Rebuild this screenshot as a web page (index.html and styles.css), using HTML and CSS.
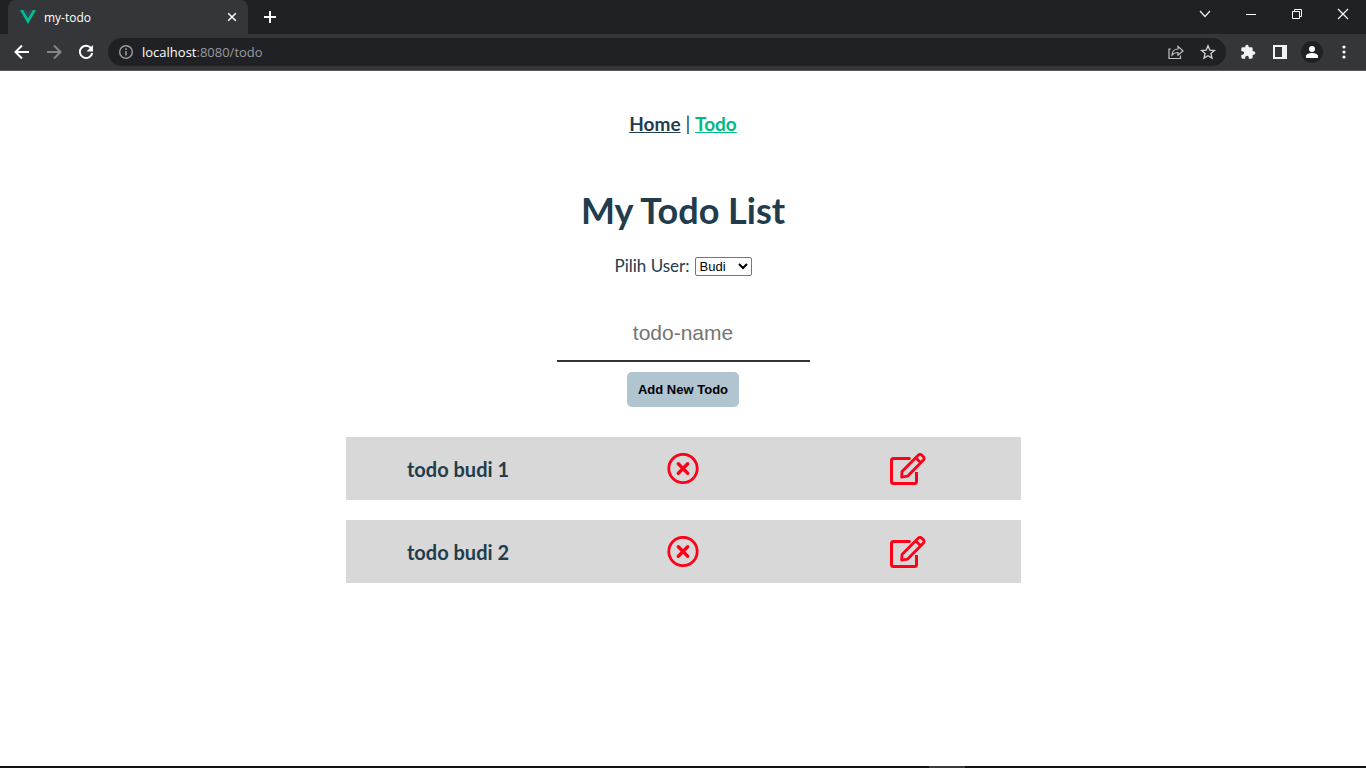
FILE: index.html
```html
<!DOCTYPE html>
<html lang="id">
<head>
<meta charset="utf-8">
<title>my-todo</title>
<link rel="stylesheet" href="styles.css">
</head>
<body>
<header class="browser">
  <div class="tabstrip">
    <div class="tab">
      <svg class="logo" width="16" height="14" viewBox="0 0 16 14"><path fill="#00c08b" d="M0 0h3.200L8 8.300 12.800 0H16L8 14z"/><path fill="#35495e" d="M3.200 0h3L8 3l1.800-3h3L8 8.300z"/></svg>
      <span class="tab-title">my-todo</span>
      <button class="icon tab-close" aria-label="Close tab"><svg width="10" height="10" viewBox="0 0 10 10"><path d="M1.200 1.200l7.600 7.600M8.800 1.200L1.200 8.800" stroke="#fff" stroke-width="1.500"/></svg></button>
    </div>
    <button class="icon new-tab" aria-label="New tab"><svg width="12" height="12" viewBox="0 0 12 12"><path d="M6 0v12M0 6h12" stroke="#fff" stroke-width="2"/></svg></button>
    <div class="window-buttons">
      <button class="icon" aria-label="Search tabs"><svg width="12" height="12" viewBox="0 0 12 12"><path d="M1 3l5 5.500L11 3" fill="none" stroke="#eee" stroke-width="1.200"/></svg></button>
      <button class="icon" aria-label="Minimize"><svg width="12" height="12" viewBox="0 0 12 12"><path d="M1 6.500h10" stroke="#fff"/></svg></button>
      <button class="icon" aria-label="Restore"><svg width="12" height="12" viewBox="0 0 12 12"><path d="M1.500 3.500h7v7h-7zM3.500 3.500v-2h7v7h-2" fill="none" stroke="#fff"/></svg></button>
      <button class="icon" aria-label="Close"><svg width="12" height="12" viewBox="0 0 12 12"><path d="M1 1l10 10M11 1L1 11" stroke="#fff" stroke-width="1.200"/></svg></button>
    </div>
  </div>
  <div class="toolbar">
    <button class="icon" aria-label="Back"><svg width="16" height="16" viewBox="0 0 16 16"><path d="M15 8H2M8 1.500L1.500 8 8 14.500" fill="none" stroke="#fff" stroke-width="2"/></svg></button>
    <button class="icon" aria-label="Forward"><svg width="16" height="16" viewBox="0 0 16 16"><path d="M1 8h13M8 1.500L14.500 8 8 14.500" fill="none" stroke="#85868a" stroke-width="2"/></svg></button>
    <button class="icon" aria-label="Reload"><svg width="16" height="16" viewBox="0 0 16 16"><path d="M13.300 4.500A6.200 6.200 0 1 0 14.200 9" fill="none" stroke="#fff" stroke-width="2"/><path d="M15 1v6.500H8.500z" fill="#fff"/></svg></button>
    <div class="address">
      <svg width="16" height="16" viewBox="0 0 16 16"><circle cx="8" cy="8" r="6.300" fill="none" stroke="#9aa0a6" stroke-width="1.400"/><path d="M8 7v4.500M8 4.300v1.600" stroke="#9aa0a6" stroke-width="1.500"/></svg>
      <span class="url"><span class="host">localhost</span>:8080/todo</span>
      <button class="icon" aria-label="Share"><svg width="16" height="16" viewBox="0 0 16 16"><path d="M3 5H1v9.500h11.500v-3" fill="none" stroke="#c0c2c5" stroke-width="1.200"/><path d="M4 11c.3-4 2.500-6 6-6V2.300L15 7l-5 4.300V8.500C7.300 8.500 5.500 9.200 4 11z" fill="none" stroke="#c0c2c5" stroke-width="1.200"/></svg></button>
      <button class="icon" aria-label="Bookmark"><svg width="16" height="16" viewBox="0 0 16 16"><path d="M8 1.800l1.800 4.300 4.700.4-3.600 3 1.100 4.600L8 11.700l-4 2.400 1.100-4.600-3.600-3 4.700-.4z" fill="none" stroke="#d0d2d5" stroke-width="1.300"/></svg></button>
    </div>
    <button class="icon" aria-label="Extensions"><svg width="16" height="16" viewBox="0 0 24 24"><path fill="#f1f3f4" d="M20.500 11H19V7a2 2 0 0 0-2-2h-4V3.500a2.500 2.500 0 0 0-5 0V5H4a2 2 0 0 0-2 2v3.800h1.500a2.700 2.700 0 0 1 0 5.400H2V20c0 1.100.9 2 2 2h3.800v-1.500a2.700 2.700 0 0 1 5.400 0V22H17a2 2 0 0 0 2-2v-4h1.500a2.500 2.500 0 0 0 0-5z"/></svg></button>
    <button class="icon" aria-label="Side panel"><svg width="16" height="14" viewBox="0 0 16 14"><path d="M2 1h12v12H2z" fill="none" stroke="#f1f3f4" stroke-width="2"/><path d="M10 0h5v14h-5z" fill="#f1f3f4"/></svg></button>
    <button class="icon profile" aria-label="Profile"><svg width="22" height="22" viewBox="0 0 22 22"><circle cx="11" cy="11" r="11" fill="#202124"/><circle cx="11" cy="8" r="3" fill="#fff"/><path d="M5 17v-2c0-2 3.500-3 6-3s6 1 6 3v2z" fill="#fff"/></svg></button>
    <button class="icon menu" aria-label="Menu"><svg width="4" height="14" viewBox="0 0 4 14"><g fill="#fff"><circle cx="2" cy="2" r="1.600"/><circle cx="2" cy="7" r="1.600"/><circle cx="2" cy="12" r="1.600"/></g></svg></button>
  </div>
</header>
<main class="page">
  <nav class="nav"><a href="#home">Home</a> | <a class="active" href="#todo">Todo</a></nav>
  <h1 class="title">My Todo List</h1>
  <div class="user-row">
    <label for="user">Pilih User:</label>
    <select id="user" class="user-select"><option>Budi</option></select>
  </div>
  <form class="add-form">
    <input class="todo-input" type="text" placeholder="todo-name" aria-label="todo-name">
    <button class="add-button" type="button">Add New Todo</button>
  </form>
  <ul class="todos">
    <li class="todo">
      <span>todo budi 1</span>
      <button class="icon" aria-label="Delete todo budi 1"><svg width="32" height="32" viewBox="0 0 32 32"><use href="#remove"/></svg></button>
      <button class="icon" aria-label="Edit todo budi 1"><svg width="36" height="32" viewBox="0 0 36 32"><use href="#edit"/></svg></button>
    </li>
    <li class="todo">
      <span>todo budi 2</span>
      <button class="icon" aria-label="Delete todo budi 2"><svg width="32" height="32" viewBox="0 0 32 32"><use href="#remove"/></svg></button>
      <button class="icon" aria-label="Edit todo budi 2"><svg width="36" height="32" viewBox="0 0 36 32"><use href="#edit"/></svg></button>
    </li>
  </ul>
</main>
<footer class="taskbar"><span class="task"></span></footer>
<svg class="symbols" width="0" height="0" aria-hidden="true">
  <symbol id="remove" viewBox="0 0 32 32"><circle cx="16" cy="15.500" r="14.200" fill="none" stroke="#ff0019" stroke-width="2.800"/><path d="M11.300 10.800l9.400 9.400M20.700 10.800l-9.400 9.400" stroke="#ff0019" stroke-width="3.400" stroke-linecap="round"/></symbol>
  <symbol id="edit" viewBox="0 0 36 32"><g fill="none" stroke="#ff0019" stroke-linejoin="round"><path d="M20.500 5.500H3.500a2 2 0 0 0-2 2V28.500a2 2 0 0 0 2 2H24.500a2 2 0 0 0 2-2V19" stroke-width="3"/><path d="M12 18.500L28.200 2.300c1.200-1.200 2.500-1.200 3.700 0l1.300 1.300c1.200 1.200 1.200 2.500 0 3.700L17.500 23.200l-5.800.9zM25.700 4.800l5 5" stroke-width="2.800"/></g></symbol>
</svg>
</body>
</html>
```
FILE: styles.css
```css
* { box-sizing: border-box; }
body {
  margin: 0;
  min-height: 100vh;
  display: flex;
  flex-direction: column;
  background: #fff;
  color: #213d4d;
  font-family: Lato, sans-serif;
}
.icon {
  display: flex;
  align-items: center;
  justify-content: center;
  padding: 0;
  border: 0;
  background: none;
}
.browser {
  background: #35363a;
  border-bottom: 1px solid #5a555e;
  color: #fff;
  font-family: "Open Sans", sans-serif;
}
.tabstrip {
  display: flex;
  height: 34px;
  padding-left: 8px;
  background: #202124;
}
.tab {
  display: flex;
  align-items: center;
  width: 240px;
  padding: 0 11px 0 12px;
  border-radius: 8px 8px 0 0;
  background: #35363a;
  font-size: 12px;
}
.tab-title { flex: 1; margin-left: 8px; }
.new-tab { width: 44px; }
.window-buttons { display: flex; margin-left: auto; height: 28px; }
.window-buttons .icon { width: 46px; }
.toolbar {
  display: flex;
  align-items: center;
  gap: 16px;
  height: 36px;
  padding: 0 14px;
}
.address {
  display: flex;
  flex: 1;
  align-items: center;
  gap: 16px;
  height: 28px;
  margin: 0 -2px;
  padding: 0 10px;
  border-radius: 14px;
  background: #202124;
}
.url { flex: 1; margin-left: -8px; color: #969ba1; font-size: 13px; }
.host { color: #fff; }
.profile { width: 16px; }
.profile svg { flex: none; }
.menu { width: 16px; }
.page {
  display: flex;
  flex: 1;
  flex-direction: column;
  align-items: center;
  padding: 39px 16px;
}
.nav { font-size: 19px; line-height: 28px; }
.nav a { color: #213d4d; font-weight: bold; }
.nav .active { color: #00b983; }
.title { margin: 48px 0 0; font-size: 36px; line-height: 48px; }
.user-row {
  display: flex;
  align-items: center;
  gap: 5px;
  margin-top: 22px;
  font-size: 17px;
  line-height: 20px;
}
.user-select {
  width: 57px;
  height: 19px;
  border: 1px solid #767676;
  border-radius: 2px;
  background: #fff;
  color: #000;
  font-family: "Liberation Sans", sans-serif;
  font-size: 13px;
}
.add-form {
  display: flex;
  flex-direction: column;
  align-items: center;
  gap: 10px;
  margin-top: 30px;
}
.todo-input {
  width: 253px;
  height: 56px;
  padding: 0 10px;
  border: 0;
  border-bottom: 2px solid #343238;
  text-align: center;
  font-family: "Liberation Sans", sans-serif;
  font-size: 21px;
}
.todo-input::placeholder { color: #757575; }
.add-button {
  height: 35px;
  padding: 0 11px;
  border: 0;
  border-radius: 5px;
  background: #b0c5d0;
  color: #000;
  font-family: "Liberation Sans", sans-serif;
  font-size: 13px;
  font-weight: bold;
}
.todos {
  display: grid;
  gap: 20px;
  width: 100%;
  max-width: 675px;
  margin: 30px 0 0;
  padding: 0;
  list-style: none;
}
.todo {
  display: grid;
  grid-template-columns: repeat(3, 1fr);
  align-items: center;
  justify-items: center;
  min-height: 63px;
  background: #d8d8d8;
  font-size: 20px;
  font-weight: bold;
}
.taskbar { display: flex; height: 2px; background: #111116; }
.task { width: 36px; margin-left: 68%; background: #3a3a3e; }
.symbols { position: absolute; }
```
